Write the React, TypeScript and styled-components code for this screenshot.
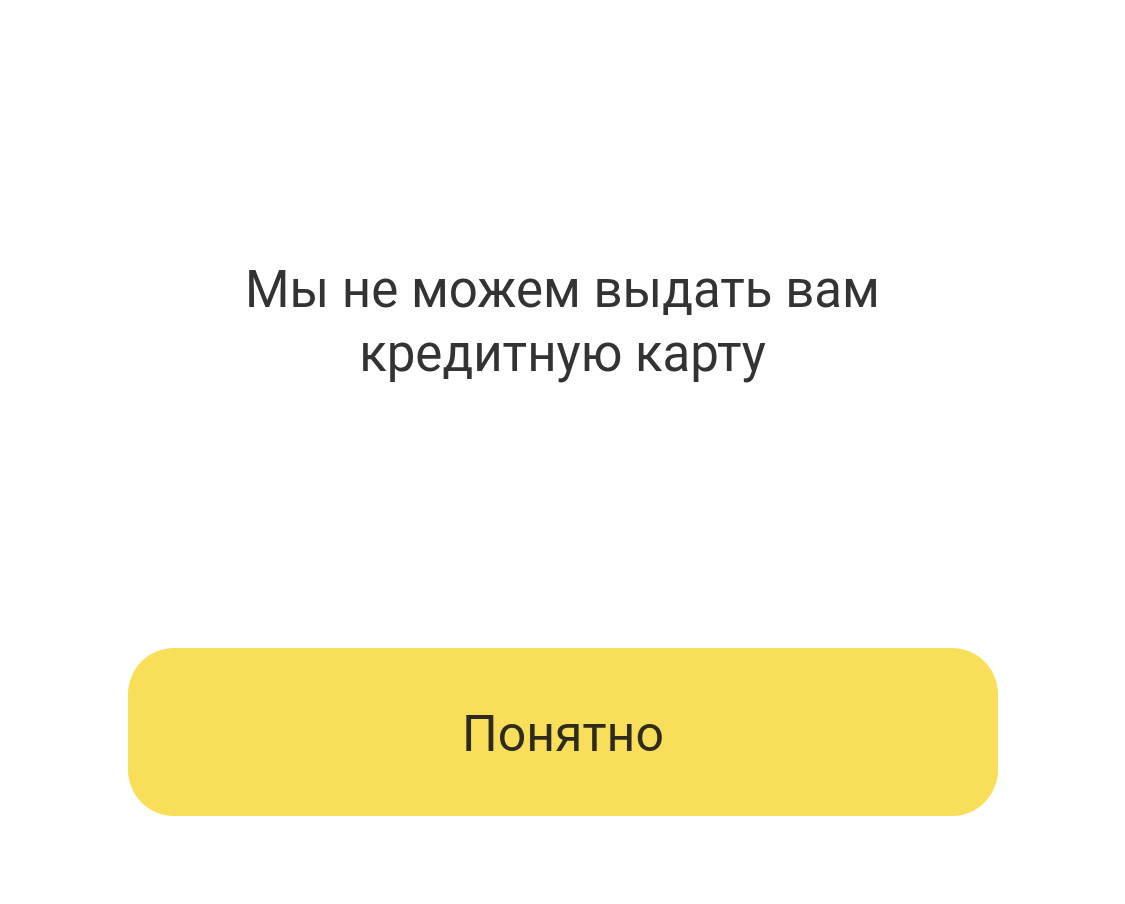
import * as React from "react";
import styled, { createGlobalStyle } from "styled-components";

const GlobalStyle = createGlobalStyle`
  html, body {
    margin: 0;
    padding: 0;
    background: #ffffff;
  }
  body {
    font-family: Roboto, "Liberation Sans", sans-serif;
  }
`;

export default function App(): JSX.Element {
  return (
    <Screen>
      <GlobalStyle />
      <MessageArea>
        <Title>
          Мы не можем выдать вам
          <br />
          кредитную карту
        </Title>
      </MessageArea>
      <Footer>
        <ActionButton type="button">Понятно</ActionButton>
      </Footer>
    </Screen>
  );
}

const Screen = styled.div`
  width: 1125px;
  height: 904px;
  display: flex;
  flex-direction: column;
  background: #ffffff;
`;

const MessageArea = styled.div`
  padding-top: 258px;
  display: flex;
  justify-content: center;
`;

const Title = styled.h1`
  margin: 0;
  font-size: 51px;
  line-height: 64px;
  font-weight: 400;
  color: #333333;
  text-align: center;
`;

const Footer = styled.div`
  margin-top: auto;
  padding: 0 127px 88px 128px;
`;

const ActionButton = styled.button`
  width: 100%;
  height: 168px;
  padding: 4px 0 0;
  border: none;
  border-radius: 46px;
  background: #f9de5a;
  color: #2e2b1c;
  font-family: Roboto, "Liberation Sans", sans-serif;
  font-size: 50px;
  font-weight: 400;
  cursor: pointer;
`;
